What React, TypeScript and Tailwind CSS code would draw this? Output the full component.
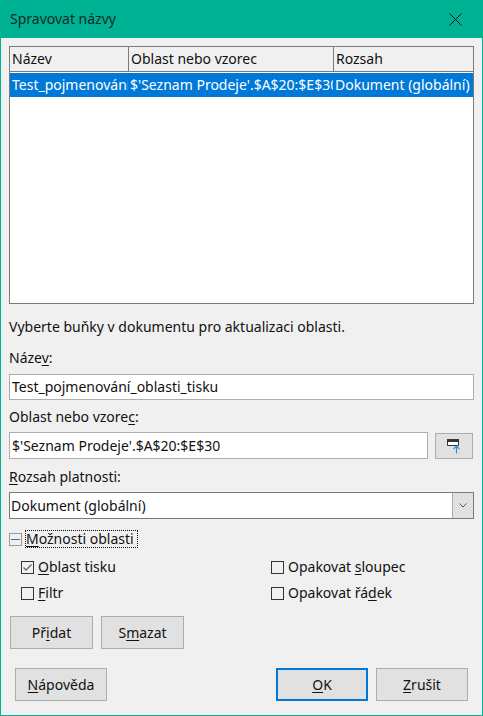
const font = "font-['Noto_Sans',sans-serif]";

function Mn({ children }: { children: string }) {
  return <span className="underline underline-offset-2">{children}</span>;
}

function Check({ checked, children }: { checked?: boolean; children: React.ReactNode }) {
  return (
    <div className="flex items-center gap-[4px] h-[26px]">
      <div className="w-[13px] h-[13px] border border-[#333] bg-[#f0f0f0] flex items-center justify-center">
        {checked && (
          <svg width="11" height="11" viewBox="0 0 11 11" fill="none">
            <path d="M1.5 5.5 L4 8 L9.5 2.5" stroke="#666" strokeWidth="1.3" />
          </svg>
        )}
      </div>
      <span>{children}</span>
    </div>
  );
}

function Btn({ className, children }: { className: string; children: React.ReactNode }) {
  return (
    <div className={`h-[33px] bg-[#e1e1e1] flex items-center justify-center ${className}`}>
      {children}
    </div>
  );
}

export default function App() {
  return (
    <div className={`w-[483px] h-[716px] bg-[#f0f0f0] border border-t-0 border-[#00b294] text-[14px] leading-[20px] text-[#111] overflow-hidden ${font}`}>
      <div className="-mx-px h-[38px] bg-[#00b294] flex items-center justify-between pl-[10px] pr-[21px] text-[#0a2a25]">
        <span>Spravovat názvy</span>
        <svg width="13" height="13" viewBox="0 0 13 13" fill="none">
          <path d="M0.5 0.5 L12.5 12.5 M12.5 0.5 L0.5 12.5" stroke="#111" strokeWidth="1" />
        </svg>
      </div>

      <div className="px-[8px] pt-[8px]">
        <div className="h-[258px] border border-[#7a7a7a] bg-white">
          <div className="h-[25px] flex bg-[#f0f0f0] border-b border-[#7a7a7a]">
            <div className="w-[119px] border-r border-[#7a7a7a] pl-[2px] leading-[24px]">Název</div>
            <div className="w-[205px] border-r border-[#7a7a7a] pl-[2px] leading-[24px]">Oblast nebo vzorec</div>
            <div className="flex-1 pl-[2px] leading-[24px]">Rozsah</div>
          </div>
          <div className="mt-px h-[24px] flex bg-[#0078d7] text-white leading-[24px] whitespace-nowrap">
            <div className="w-[118px] pl-[2px] overflow-hidden">Test_pojmenování_oblasti_tisku</div>
            <div className="w-[205px] pl-[2px] overflow-hidden">$'Seznam Prodeje'.$A$20:$E$30</div>
            <div className="flex-1 pl-[2px] overflow-hidden">Dokument (globální)</div>
          </div>
        </div>

        <div className="mt-[13px]">Vyberte buňky v dokumentu pro aktualizaci oblasti.</div>

        <div className="mt-[11px]">Náze<Mn>v</Mn>:</div>
        <div className="mt-[6px] h-[26px] border border-[#adadad] bg-white pl-[2px] leading-[24px]">
          Test_pojmenování_oblasti_tisku
        </div>

        <div className="mt-[7px]">Oblast nebo vzore<Mn>c</Mn>:</div>
        <div className="mt-[5px] flex items-center gap-[7px]">
          <div className="w-[419px] h-[27px] border border-[#adadad] bg-white pl-[2px] leading-[25px]">
            $'Seznam Prodeje'.$A$20:$E$30
          </div>
          <div className="w-[38px] h-[26px] bg-[#e1e1e1] border border-[#adadad] flex items-center justify-center">
            <svg width="14" height="15" viewBox="0 0 14 15" fill="none" className="mt-px">
              <path d="M0.5 0.5 H11.5 V6.5 H0.5 Z" fill="#fff" stroke="#333" />
              <path d="M0 0 H12 V3 H0 Z" fill="#333" />
              <path d="M9.5 14.5 V7 M6.5 10 L9.5 7 L12.5 10" stroke="#2a94e0" strokeWidth="1.2" />
            </svg>
          </div>
        </div>

        <div className="mt-[8px]"><Mn>R</Mn>ozsah platnosti:</div>
        <div className="mt-[5px] h-[27px] flex border border-[#7a7a7a] bg-white">
          <div className="flex-1 pl-[1px] leading-[25px]">Dokument (globální)</div>
          <div className="w-[21px] bg-[#e1e1e1] border-l border-[#adadad] flex items-center justify-center">
            <svg width="8" height="5" viewBox="0 0 8 5" fill="none">
              <path d="M0.5 0.5 L4 4 L7.5 0.5" stroke="#555" />
            </svg>
          </div>
        </div>

        <div className="mt-[9px] flex items-center h-[22px]">
          <div className="w-[13px] h-[13px] border border-[#999] flex items-center justify-center">
            <div className="w-[9px] h-px bg-[#4a6a9a]" />
          </div>
          <div className="ml-[3px] h-[18px] leading-[16px] border border-dotted border-[#111]">
            <Mn>M</Mn>ožnosti oblasti&nbsp;
          </div>
        </div>

        <div className="mt-[4px] ml-[12px] grid grid-cols-[250px_1fr]">
          <Check checked><Mn>O</Mn>blast tisku</Check>
          <Check>Opakovat <Mn>s</Mn>loupec</Check>
          <Check><Mn>F</Mn>iltr</Check>
          <Check>Opakovat řá<Mn>d</Mn>ek</Check>
        </div>

        <div className="mt-[10px] ml-px flex gap-[8px]">
          <Btn className="w-[83px] border border-[#adadad]"><span>Př<Mn>i</Mn>dat</span></Btn>
          <Btn className="w-[83px] border border-[#adadad]"><span>S<Mn>m</Mn>azat</span></Btn>
        </div>

        <div className="mt-[19px] ml-[6px] flex">
          <Btn className="w-[92px] border border-[#adadad]"><span><Mn>N</Mn>ápověda</span></Btn>
          <Btn className="ml-[169px] w-[92px] border-2 border-[#0078d7]"><span><Mn>O</Mn>K</span></Btn>
          <Btn className="ml-[8px] w-[92px] border border-[#adadad]"><span><Mn>Z</Mn>rušit</span></Btn>
        </div>
      </div>
    </div>
  );
}
